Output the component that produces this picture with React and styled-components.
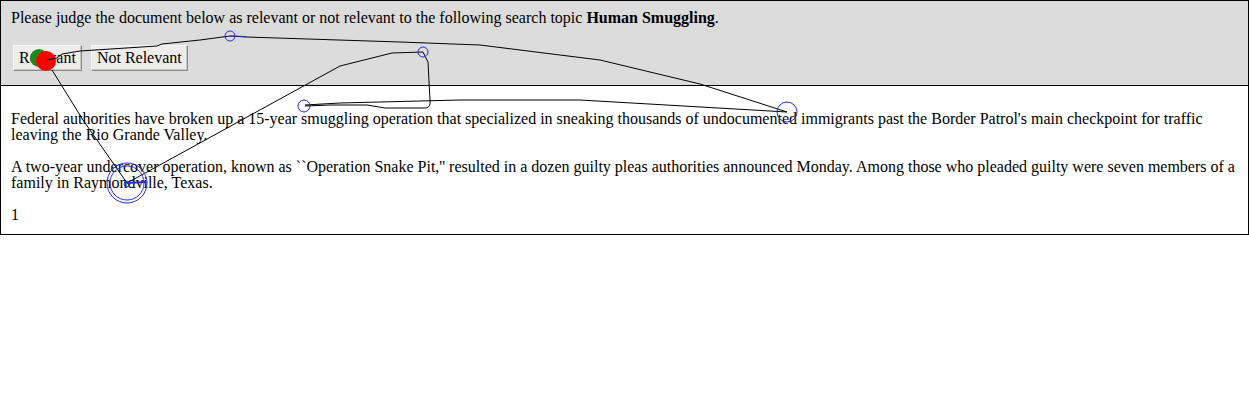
import React from 'react';
import styled, { createGlobalStyle } from 'styled-components';

const GlobalStyle = createGlobalStyle`
	html, body {
		margin: 0;
		padding: 0;
		background: #fff;
	}
	body {
		font-family: "Liberation Serif", "Times New Roman", serif;
		font-size: 16px;
		color: #000;
	}
`

const Page = styled.div`
	position: relative;
	width: 1249px;
	height: 400px;
`

const Frame = styled.div`
	border: 1px solid #000;
	width: 1247px;
`

const Header = styled.div`
	background: #dcdcdc;
	border-bottom: 1px solid #000;
	padding: 9px 10px 14px;
	display: flex;
	flex-direction: column;
	gap: 19px;
`

const Prompt = styled.div`
	line-height: 16px;
`

const Buttons = styled.div`
	display: flex;
	gap: 9px;
	padding-left: 2px;
`

const JudgeBtn = styled.button`
	font-family: "Liberation Serif", "Times New Roman", serif;
	font-size: 16px;
	height: 26px;
	padding: 0 5px;
	background: #efedea;
	color: #000;
	border: 1px solid;
	border-color: #f8f8f8 #8a8a8a #8a8a8a #f8f8f8;
	box-shadow: inset -1px -1px 0 #c8c6c2;
	border-radius: 0;
`

const Doc = styled.div`
	padding: 25px 10px 11px;
	display: flex;
	flex-direction: column;
	gap: 16px;
	line-height: 16px;
`

const Para = styled.p`
	margin: 0;
`

const Overlay = styled.svg`
	position: absolute;
	left: 0;
	top: 0;
	pointer-events: none;
`

function MouseTrack() {
	const blue = '#2a2ad8';
	return (
		<Overlay width="1249" height="400" viewBox="0 0 1249 400">
			<circle cx="39" cy="58" r="9" fill="#1c8a1c" />
			<circle cx="46" cy="61" r="10" fill="#f00" />
			<g fill="none" stroke="#000" strokeWidth="1">
				<path d="M47 60 L57 58 L62 54 L80 51 L157 46 L162 44 L200 40 L230 36 L246 37 L400 42 L480 45 L600 60 L700 84 L787 112" />
				<path d="M305 105 L340 103 L460 100 L580 100 L787 112" />
				<path d="M305 106 L330 105 L367 105 L385 108 L426 108 Q431 107 430 100 L428 62 L423 52 L392 53 L340 66 L127 183" />
				<path d="M52 70 L83 120 L127 183" />
			</g>
			<g fill="none" stroke={blue} strokeWidth="1">
				<circle cx="230" cy="36" r="5" />
				<line x1="230" y1="36" x2="246" y2="36.5" />
				<circle cx="423" cy="52" r="5" />
				<circle cx="304" cy="106" r="6" />
				<circle cx="787" cy="112" r="10" />
				<circle cx="127" cy="183" r="20" />
				<circle cx="127" cy="183" r="17" />
				<circle cx="127" cy="184" r="3" />
				<line x1="127" y1="183" x2="145" y2="182" strokeWidth="2" />
			</g>
		</Overlay>
	);
}

export default function App() {
	return (
		<Page>
			<GlobalStyle />
			<Frame>
				<Header>
					<Prompt>
						Please judge the document below as relevant or not relevant to the following search topic <b>Human Smuggling</b>.
					</Prompt>
					<Buttons>
						<JudgeBtn>Relevant</JudgeBtn>
						<JudgeBtn>Not Relevant</JudgeBtn>
					</Buttons>
				</Header>
				<Doc>
					<Para>
						Federal authorities have broken up a 15-year smuggling operation that specialized in sneaking thousands of undocumented immigrants past the Border Patrol's main checkpoint for traffic leaving the Rio Grande Valley.
					</Para>
					<Para>
						A two-year undercover operation, known as ``Operation Snake Pit,'' resulted in a dozen guilty pleas authorities announced Monday. Among those who pleaded guilty were seven members of a family in Raymondville, Texas.
					</Para>
					<Para>1</Para>
				</Doc>
			</Frame>
			<MouseTrack />
		</Page>
	);
}
